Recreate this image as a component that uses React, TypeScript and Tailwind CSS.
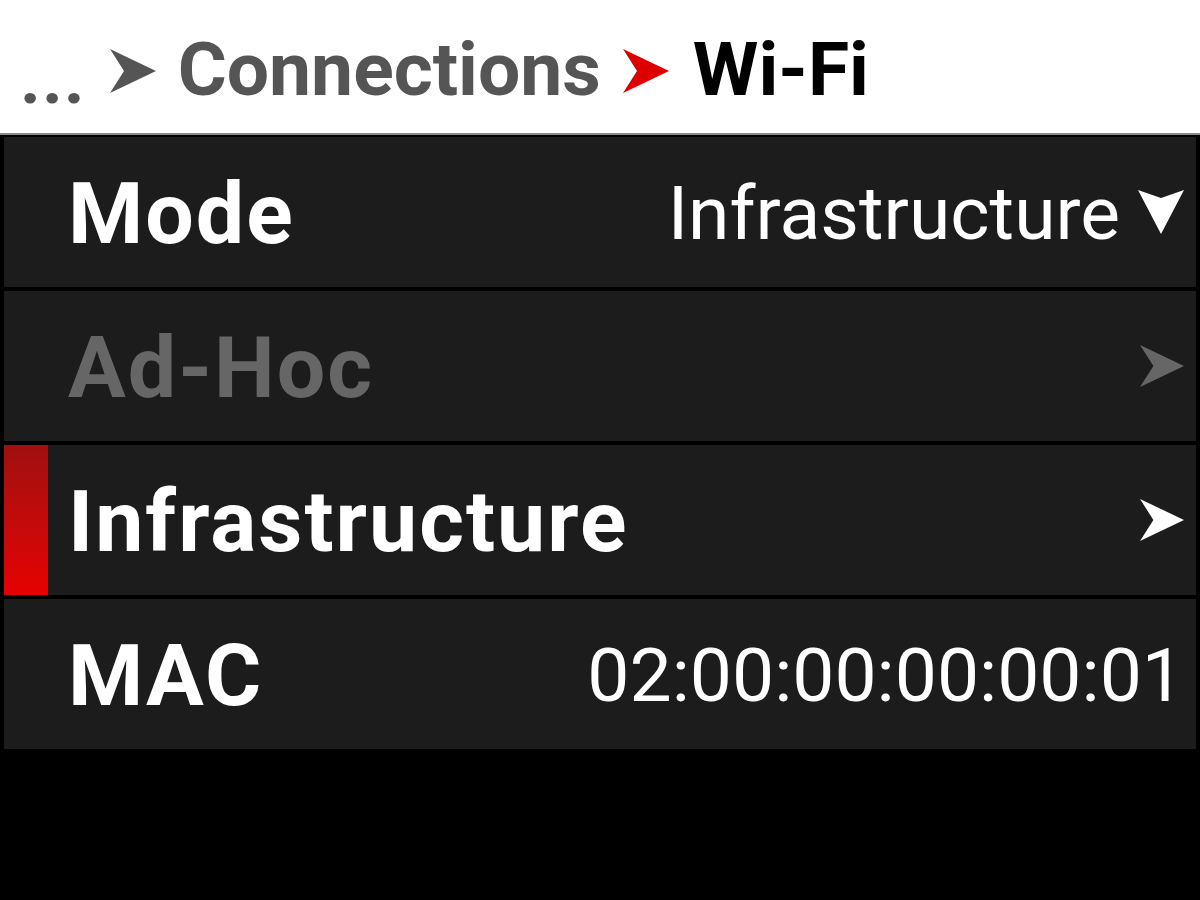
import React from "react";

const Arrow = ({ color, className }: { color: string; className?: string }) => (
  <svg viewBox="0 0 46 44" className={className} fill={color}>
    <path d="M0 0 L46 22 L0 44 L14 22 Z" />
  </svg>
);

const Down = ({ color, className }: { color: string; className?: string }) => (
  <svg viewBox="0 0 46 44" className={className} fill={color}>
    <path d="M0 0 L23 8 L46 0 L23 44 Z" />
  </svg>
);

const font = { fontFamily: "Roboto, 'Liberation Sans', sans-serif" };

export default function App() {
  return (
    <div className="w-[1200px] h-[900px] bg-black flex flex-col overflow-hidden" style={font}>
      <div className="h-[135px] bg-white flex items-center pl-[20px] pt-[6px] border-b-[2px] border-[#888]">
        <span className="text-[72px] font-bold text-[#555] leading-none tracking-[1px] mt-[18px]">...</span>
        <Arrow color="#555" className="w-[46px] h-[44px] ml-[24px] mt-[2px]" />
        <span className="text-[75px] font-bold text-[#555] leading-none ml-[22px]">Connections</span>
        <Arrow color="#dd0000" className="w-[46px] h-[44px] ml-[22px] mt-[2px]" />
        <span className="text-[75px] font-bold text-black leading-none ml-[24px]">Wi-Fi</span>
      </div>
      <div className="flex flex-col gap-[4px] pt-[2px] pl-[4px] pr-[4px]">
        <div className="h-[150px] bg-[#1c1c1c] flex items-center pl-[64px] pr-[12px]">
          <span className="text-[86px] font-bold tracking-[2px] text-white leading-none mt-[4px]">Mode</span>
          <span className="ml-auto text-[75px] text-white leading-none mt-[2px]">Infrastructure</span>
          <Down color="#ffffff" className="w-[46px] h-[44px] ml-[18px]" />
        </div>
        <div className="h-[150px] bg-[#1c1c1c] flex items-center pl-[64px] pr-[12px]">
          <span className="text-[86px] font-bold tracking-[2px] text-[#666] leading-none mt-[4px]">Ad-Hoc</span>
          <Arrow color="#666666" className="w-[44px] h-[46px] ml-auto" />
        </div>
        <div className="h-[150px] bg-[#1c1c1c] flex items-center pr-[12px]">
          <div className="w-[44px] h-full bg-gradient-to-b from-[#a00f0f] to-[#e60000]" />
          <span className="text-[86px] font-bold tracking-[2px] text-white leading-none ml-[20px] mt-[4px]">Infrastructure</span>
          <Arrow color="#ffffff" className="w-[44px] h-[46px] ml-auto" />
        </div>
        <div className="h-[150px] bg-[#1c1c1c] flex items-center pl-[64px] pr-[12px]">
          <span className="text-[86px] font-bold tracking-[2px] text-white leading-none mt-[4px]">MAC</span>
          <span className="ml-auto text-[75px] text-white leading-none mt-[2px]">02:00:00:00:00:01</span>
        </div>
      </div>
    </div>
  );
}
